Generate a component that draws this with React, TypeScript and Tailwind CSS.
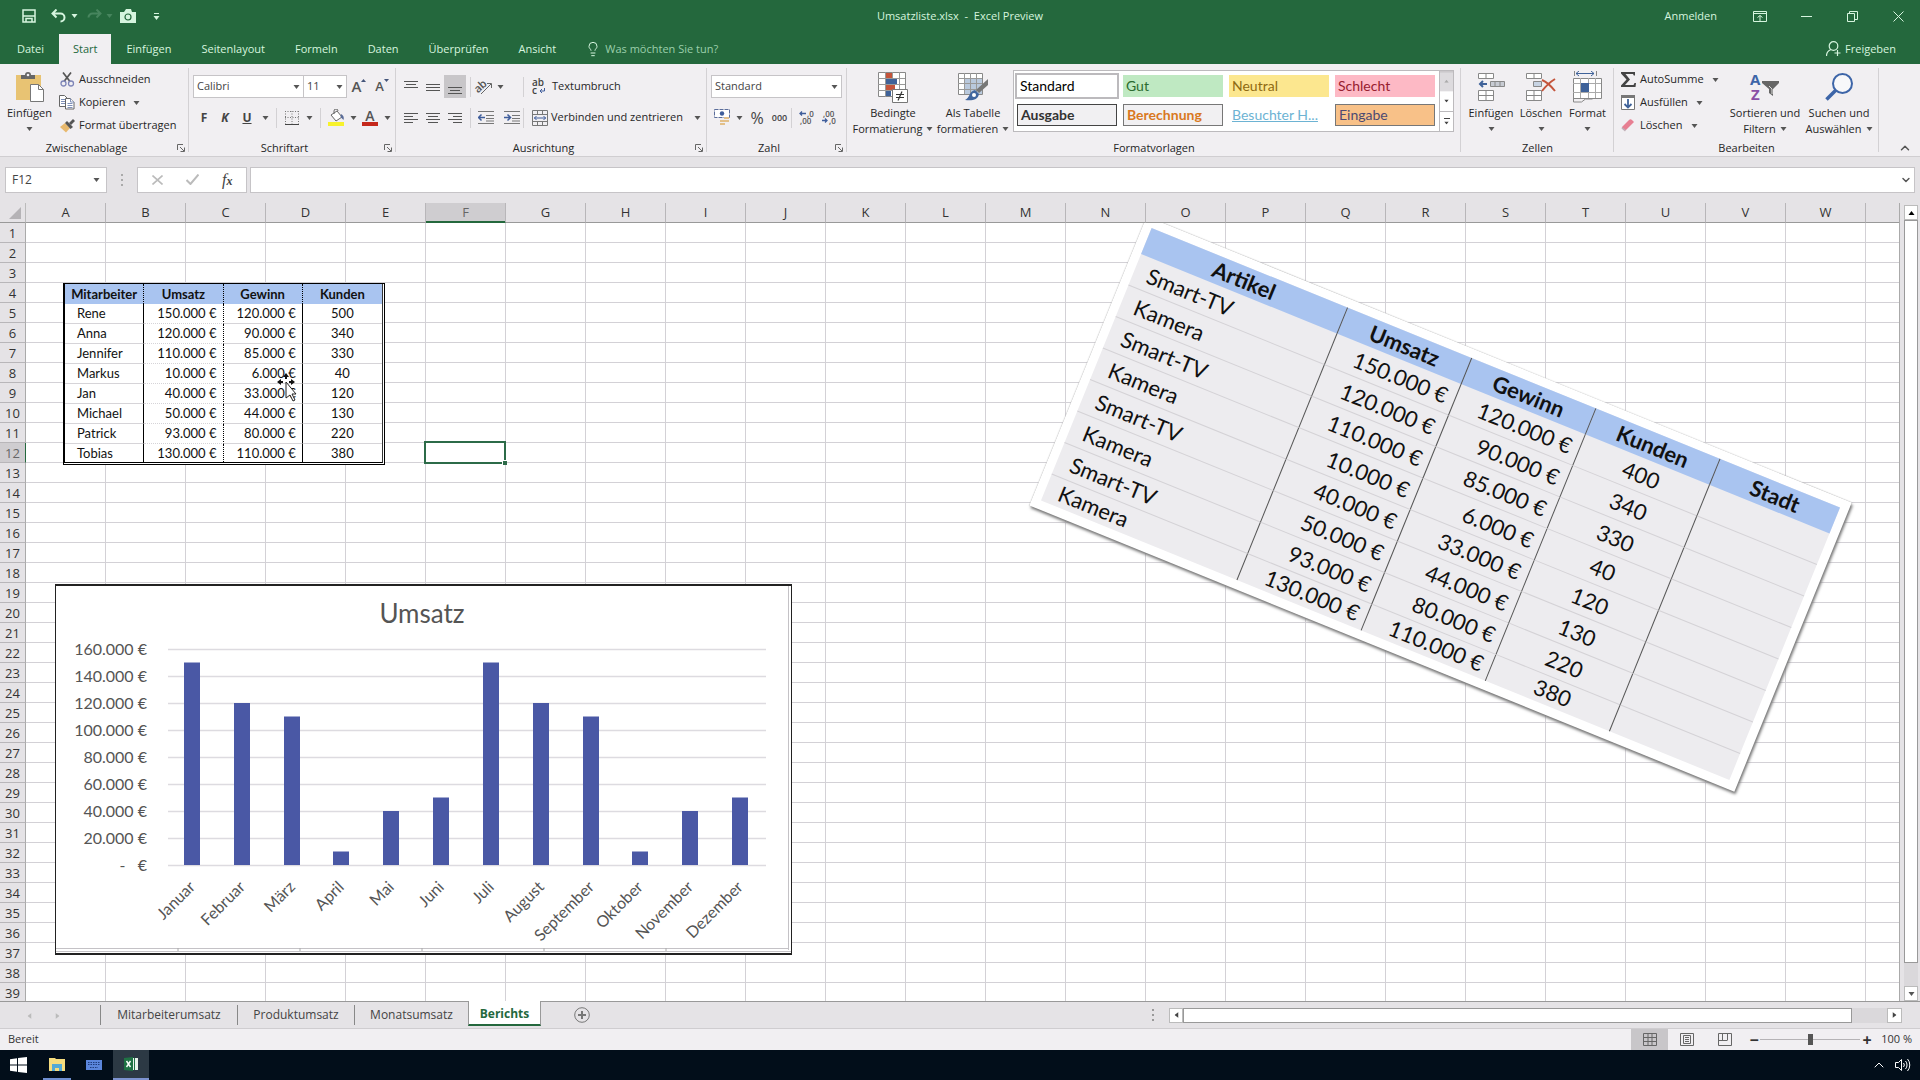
import React from "react";
import { ChevronDown, ChevronUp, Lightbulb } from "lucide-react";

const COLUMNS = "ABCDEFGHIJKLMNOPQRSTUVW".split("");
const ROWS = Array.from({ length: 39 }, (_, i) => i + 1);

const TABS = ["Datei", "Start", "Einfügen", "Seitenlayout", "Formeln", "Daten", "Überprüfen", "Ansicht"];

const EMPLOYEES = [
  ["Rene", "150.000 €", "120.000 €", "500"],
  ["Anna", "120.000 €", "90.000 €", "340"],
  ["Jennifer", "110.000 €", "85.000 €", "330"],
  ["Markus", "10.000 €", "6.000 €", "40"],
  ["Jan", "40.000 €", "33.000 €", "120"],
  ["Michael", "50.000 €", "44.000 €", "130"],
  ["Patrick", "93.000 €", "80.000 €", "220"],
  ["Tobias", "130.000 €", "110.000 €", "380"],
];

const PRODUCTS = [
  ["Smart-TV", "150.000 €", "120.000 €", "400"],
  ["Kamera", "120.000 €", "90.000 €", "340"],
  ["Smart-TV", "110.000 €", "85.000 €", "330"],
  ["Kamera", "10.000 €", "6.000 €", "40"],
  ["Smart-TV", "40.000 €", "33.000 €", "120"],
  ["Kamera", "50.000 €", "44.000 €", "130"],
  ["Smart-TV", "93.000 €", "80.000 €", "220"],
  ["Kamera", "130.000 €", "110.000 €", "380"],
];

const MONTHS = [
  { name: "Januar", value: 150 },
  { name: "Februar", value: 120 },
  { name: "März", value: 110 },
  { name: "April", value: 10 },
  { name: "Mai", value: 40 },
  { name: "Juni", value: 50 },
  { name: "Juli", value: 150 },
  { name: "August", value: 120 },
  { name: "September", value: 110 },
  { name: "Oktober", value: 10 },
  { name: "November", value: 40 },
  { name: "Dezember", value: 50 },
];

const Caret = ({ className = "text-[#555]" }: { className?: string }) => (
  <svg width="7" height="4" viewBox="0 0 7 4" className={`shrink-0 ${className}`}>
    <path d="M0.5 0h6L3.5 4z" fill="currentColor" />
  </svg>
);

const Divider = () => <span className="h-5 w-px bg-[#d3d1d4]" />;

interface GroupProps {
  label: string;
  className: string;
  launcher?: boolean;
  children: React.ReactNode;
}

const Group = ({ label, className, launcher, children }: GroupProps) => (
  <section className={`relative flex shrink-0 flex-col pt-1 after:absolute after:right-0 after:top-1 after:h-[84px] after:w-px after:bg-[#d3d1d4] ${className}`}>
    <div className="flex h-[72px]">{children}</div>
    <div className={`relative flex h-4 items-center justify-center ${launcher ? "pr-4" : ""}`}>
      <span>{label}</span>
      {launcher && (
        <button aria-label={`${label} Optionen`} className="absolute right-1 top-1">
          <svg width="8" height="8" viewBox="0 0 8 8" fill="none" stroke="#666">
            <path d="M0.5 6V0.5H6M3 3l4 4M7.5 3.5v4h-4" />
          </svg>
        </button>
      )}
    </div>
  </section>
);

interface BigButtonProps {
  icon: React.ReactNode;
  lines: string[];
  className: string;
}

const BigButton = ({ icon, lines, className }: BigButtonProps) => (
  <button className={`flex shrink-0 flex-col items-center pt-[3px] leading-4 ${className}`}>
    <span className="mb-[2px] flex h-8 items-center">{icon}</span>
    <span className="whitespace-nowrap">{lines[0]}</span>
    <span className="flex h-4 items-center gap-1 whitespace-nowrap">
      {lines[1]}
      <Caret />
    </span>
  </button>
);

const SmallButton = ({ icon, label, caret }: { icon: React.ReactNode; label: string; caret?: boolean }) => (
  <button className="flex h-[23px] items-center gap-1 whitespace-nowrap">
    <span className="flex w-4 justify-center">{icon}</span>
    {label}
    {caret && <span className="pl-1"><Caret /></span>}
  </button>
);

const Dropdown = ({ label, value, className }: { label: string; value: string; className: string }) => (
  <div className={`relative h-[23px] border border-[#c6c4c7] bg-white ${className}`}>
    <select aria-label={label} className="h-full w-full appearance-none bg-transparent pl-[3px] text-[#444] outline-none">
      <option>{value}</option>
    </select>
    <span className="pointer-events-none absolute right-[3px] top-[9px]"><Caret /></span>
  </div>
);

// three or four horizontal strokes given as [x, width]
const Lines = ({ rows, top = 1 }: { rows: number[][]; top?: number }) => (
  <svg width="14" height="14" viewBox="0 0 14 14">
    {rows.map(([x, w], i) => (
      <rect key={i} x={x} y={top + i * 3} width={w} height="1" fill="#555" />
    ))}
  </svg>
);

const IconButton = ({ label, className = "w-[22px]", children }: { label: string; className?: string; children: React.ReactNode }) => (
  <button aria-label={label} className={`flex h-[23px] shrink-0 items-center justify-center ${className}`}>
    {children}
  </button>
);

const PasteIcon = () => (
  <svg width="30" height="32" viewBox="0 0 30 32">
    <rect x="1" y="4" width="25" height="25" fill="#e8c373" />
    <path d="M6 8V4h4a3 3 0 0 1 6 0h4v4z" fill="#666" />
    <circle cx="13" cy="4" r="1.3" fill="#f1eff2" />
    <path d="M15.500 13.500h8l5 5v12h-13z" fill="#fff" stroke="#777" />
    <path d="M23.500 13.500v5h5" fill="none" stroke="#777" />
  </svg>
);

const CutIcon = () => (
  <svg width="15" height="15" viewBox="0 0 15 15" fill="none">
    <path d="M3 0.500l7 9M11 0.500l-7 9" stroke="#555" strokeWidth="1.700" />
    <circle cx="3.500" cy="11.500" r="2.500" stroke="#7f86b8" strokeWidth="1.300" />
    <circle cx="11" cy="11.500" r="2.500" stroke="#7f86b8" strokeWidth="1.300" />
  </svg>
);

const CopyIcon = () => (
  <svg width="16" height="15" viewBox="0 0 16 15" fill="#fff" stroke="#666">
    <path d="M0.500 0.500h5l3 3v8h-8z" />
    <path d="M2 4.500h4M2 6.500h4M2 8.500h4" stroke="#7f90b8" />
    <path d="M6.500 3.500h5l3.500 3.500v7h-8.500z" />
    <path d="M8.500 8.500h5M8.500 10.500h5M8.500 12.500h5M11.500 3.500v3.500h3.500" stroke="#7f90b8" />
  </svg>
);

const BrushIcon = () => (
  <svg width="15" height="14" viewBox="0 0 15 14">
    <path d="M0 8l5-4 5 5-4 4.500z" fill="#e8b96e" />
    <path d="M5 4l2-2 6 6-2.500 2z" fill="#555" />
    <path d="M9 4l4-4 2 2-4 4z" fill="#555" />
  </svg>
);

const OrientationIcon = () => (
  <svg width="18" height="16" viewBox="0 0 18 16" className="overflow-visible">
    <text x="0" y="11" fontSize="11" fontWeight="600" fill="#555" transform="rotate(-42 6 9)">ab</text>
    <path d="M6 15L16 5M16.500 9V4.500H12" stroke="#666" fill="none" />
  </svg>
);

const IndentIcon = ({ right }: { right?: boolean }) => (
  <svg width="16" height="14" viewBox="0 0 16 14">
    <path d="M0 0.500h16M8 4.500h8M8 7.500h8M0 12.500h16M8 10h8" stroke="#777" />
    <path d={right ? "M0 6.500h6M3.500 3.500l3 3-3 3" : "M1 6.500h6M3.500 3.500l-3 3 3 3"} stroke="#3f5d9b" strokeWidth="1.500" fill="none" />
  </svg>
);

const MergeIcon = () => (
  <svg width="16" height="16" viewBox="0 0 16 16" fill="none" stroke="#777">
    <path d="M0.500 0.500h15v15h-15zM0.500 4.500h15M0.500 11.500h15M5.500 0.500v4M10.500 0.500v4M5.500 11.500v4M10.500 11.500v4" />
    <path d="M2 8h12M4.500 6L2.500 8l2 2M11.500 6l2 2-2 2" stroke="#3f5d9b" />
  </svg>
);

const MoneyIcon = () => (
  <svg width="16" height="17" viewBox="0 0 16 17">
    <path d="M0.500 0.500h15v8h-15z" fill="#fff" stroke="#5b6d9b" strokeDasharray="4 1" />
    <circle cx="8" cy="4.500" r="2.200" fill="#3f5d9b" />
    <path d="M10 8h5v2h-5zM6 11h5v2H6zM10 11h5v2h-5zM6 14h5v2H6z" fill="#e3c08a" />
  </svg>
);

const DecimalIcon = ({ less }: { less?: boolean }) => (
  <svg width="16" height="15" viewBox="0 0 16 15" className="overflow-visible">
    <text x={less ? 1 : 8} y="7" fontSize="8" fontWeight="600" fill="#555">{less ? ",00" : ",0"}</text>
    <text x={less ? 7 : 1} y="14" fontSize="8" fontWeight="600" fill="#555">{less ? ",0" : ",00"}</text>
    <path d={less ? "M0 10.500h5M3 8.500l2 2-2 2" : "M1 3.500h6M3 1.500l-2 2 2 2"} stroke="#3f5d9b" strokeWidth="1.300" fill="none" />
  </svg>
);

const ConditionalIcon = () => (
  <svg width="30" height="31" viewBox="0 0 30 31">
    <path d="M0.500 0.500h27v24h-27z" fill="#fff" stroke="#888" />
    <path d="M7.500 0v25M14.500 0v25M21.500 0v25M0 6.500h27M0 12.500h27M0 18.500h27" stroke="#999" />
    <path d="M8 1h6v5H8zM8 13h9v5H8z" fill="#c4543b" />
    <path d="M8 7h11v5H8zM8 19h5v5H8z" fill="#3f6299" />
    <path d="M14.500 17.500h15v13h-15z" fill="#fff" stroke="#777" />
    <path d="M18 22.500h8M18 25.500h8M24 19.500l-4 9" stroke="#333" strokeWidth="1.200" />
  </svg>
);

const TableStyleIcon = () => (
  <svg width="30" height="30" viewBox="0 0 30 30">
    <path d="M0.500 1.500h24v21h-24z" fill="#fff" stroke="#888" />
    <path d="M6 7h18v15H6z" fill="#b9c9dd" />
    <path d="M6.500 1v21M12.500 1v21M18.500 1v21M0 6.500h24M0 11.500h24M0 17.500h24" stroke="#999" />
    <path d="M30 7v6L21 21l-3-3z" fill="#777" />
    <path d="M17 18l4 4c-1 6-7 7-14 6 5-2 4-9 10-10z" fill="#41669f" />
    <circle cx="16" cy="23" r="2" fill="#fff" />
  </svg>
);

const InsertCellsIcon = () => (
  <svg width="28" height="28" viewBox="0 0 28 28" fill="#fff" stroke="#888">
    <path d="M1.500 0.500h15v5h-15zM9 0.500v5M1.500 17.500h15v10h-15zM9 17.500v10M1.500 22.500h15" />
    <path d="M13.500 8.500h14v5h-14zM18 8.500v5M23 8.500v5" fill="#c7cbd3" />
    <path d="M3 11h7M6 8l-3 3 3 3" fill="none" stroke="#3f6299" strokeWidth="2" />
  </svg>
);

const DeleteCellsIcon = () => (
  <svg width="30" height="28" viewBox="0 0 30 28" fill="#fff" stroke="#888">
    <path d="M0.500 0.500h15v5h-15zM8 0.500v5M0.500 17.500h15v10h-15zM8 17.500v10M0.500 22.500h15" />
    <path d="M7.500 8.500h8v5h-8z" fill="#c7d3e3" />
    <path d="M16 7c5 2 9 6 13 11M29 6c-5 3-9 7-13 12" fill="none" stroke="#c4543b" strokeWidth="2" />
  </svg>
);

const FormatCellsIcon = () => (
  <svg width="29" height="32" viewBox="0 0 29 32" fill="none" stroke="#888">
    <path d="M0.500 7.500h28v20h-28z" fill="#fff" />
    <path d="M7.500 7v20M15.500 7v20M22.500 7v20M0 12.500h28M0 21.500h28" stroke="#aaa" />
    <path d="M8 12h8v9H8z" fill="#3f6299" stroke="none" />
    <path d="M0.500 27v4h8l4-3h7M1.500 0v5M23.500 0v5" />
    <path d="M3 2.500h18M6 0L3 2.500 6 5M18 0l3 2.500L18 5" stroke="#3f6299" />
  </svg>
);

const SortIcon = () => (
  <svg width="30" height="30" viewBox="0 0 30 30" className="overflow-visible">
    <text x="0" y="13" fontSize="15" fontWeight="700" fill="#3d65a8">A</text>
    <text x="1" y="28" fontSize="15" fontWeight="700" fill="#8a4fa5">Z</text>
    <path d="M12 9h17v2l-6 6v7l-4-3v-4l-7-6z" fill="#666" />
    <path d="M19 14l3 3v5" stroke="#ddd" fill="none" />
  </svg>
);

const FindIcon = () => (
  <svg width="28" height="28" viewBox="0 0 28 28">
    <circle cx="17.500" cy="10.500" r="9.500" fill="#f8f8fa" stroke="#3d65a8" strokeWidth="2" />
    <path d="M11 17L1.500 26.500" stroke="#3d65a8" strokeWidth="3.500" />
  </svg>
);

const TitleBar = () => (
  <header className="bg-[#24683d] text-[#d6f5df]">
    <div className="grid h-[34px] grid-cols-3 items-center pb-[2px]">
      <div className="flex items-center pl-[22px]">
        <button aria-label="Speichern" className="w-[29px]">
          <svg width="14" height="14" viewBox="0 0 14 14" fill="none" stroke="currentColor" strokeWidth="1.500">
            <path d="M1 1h12v12H1zM1 7h12M4 13V9.500h6V13" />
          </svg>
        </button>
        <button aria-label="Rückgängig" className="flex w-[35px] items-center gap-1">
          <svg width="16" height="14" viewBox="0 0 16 14" fill="none" stroke="currentColor" strokeWidth="2">
            <path d="M5.500 0.500L1.500 4.500l4 4M2 4.500h7.500a4 4 0 0 1 0 8" />
          </svg>
          <Caret className="text-[#d6f5df]" />
        </button>
        <button aria-label="Wiederholen" className="flex w-[34px] items-center gap-1 text-[#47855e]">
          <svg width="16" height="14" viewBox="0 0 16 14" fill="none" stroke="currentColor" strokeWidth="2">
            <path d="M10.500 0.500l4 4-4 4M14 4.500H6.500a4 4 0 0 0-4 4" />
          </svg>
          <Caret className="text-[#47855e]" />
        </button>
        <button aria-label="Kamera" className="w-[33px]">
          <svg width="16" height="14" viewBox="0 0 16 14">
            <path d="M0 3h4l2-3h5l1 3h4v11H0z" fill="currentColor" />
            <circle cx="8" cy="8" r="3" fill="none" stroke="#24683d" strokeWidth="1.200" />
          </svg>
        </button>
        <button aria-label="Symbolleiste anpassen" className="flex flex-col items-center gap-[2px]">
          <span className="h-px w-[5px] bg-[#d6f5df]" />
          <Caret className="text-[#d6f5df]" />
        </button>
      </div>
      <h1 className="whitespace-pre text-center">Umsatzliste.xlsx  -  Excel Preview</h1>
      <div className="flex items-center justify-end pr-4">
        <button className="mr-9">Anmelden</button>
        <button aria-label="Menüband-Anzeigeoptionen" className="w-12">
          <svg width="14" height="11" viewBox="0 0 14 11" fill="none" stroke="currentColor">
            <path d="M0.500 0.500h13v10h-13zM0.500 2.500h13M7 10V4.500M4.500 6.500L7 4.500l2.500 2" />
          </svg>
        </button>
        <button aria-label="Minimieren" className="w-[46px]">
          <svg width="11" height="11" viewBox="0 0 11 11" stroke="currentColor"><path d="M0 5.500h11" /></svg>
        </button>
        <button aria-label="Verkleinern" className="w-[46px]">
          <svg width="11" height="11" viewBox="0 0 11 11" fill="none" stroke="currentColor">
            <path d="M0.500 2.500h7v8h-7zM2.500 2V0.500h8v8H8" />
          </svg>
        </button>
        <button aria-label="Schließen">
          <svg width="11" height="11" viewBox="0 0 11 11" stroke="currentColor"><path d="M0.500 0.500l10 10M10.500 0.500l-10 10" /></svg>
        </button>
      </div>
    </div>
    <div className="flex h-[30px] items-stretch pl-[2px]">
      {TABS.map((tab) => (
        <button key={tab} className={tab === "Start" ? "bg-[#f1eff2] px-[14px] text-[#24683d]" : "px-[15px]"}>
          {tab}
        </button>
      ))}
      <label className="flex items-center gap-1 pl-[14px]">
        <Lightbulb size={16} strokeWidth={1.5} />
        <input aria-label="Was möchten Sie tun?" placeholder="Was möchten Sie tun?" className="w-40 bg-transparent outline-none placeholder:text-[#9bcfab]" />
      </label>
      <button className="ml-auto flex items-center gap-1 pr-6">
        <svg width="15" height="16" viewBox="0 0 15 16" fill="none" stroke="currentColor" strokeWidth="1.200">
          <circle cx="7.500" cy="5" r="4.300" />
          <path d="M0.500 15c0-4 2-5.500 4.500-6.500M11.500 9v6M8.500 12h6" />
        </svg>
        Freigeben
      </button>
    </div>
  </header>
);

const STYLES = [
  { name: "Standard", className: "bg-white outline-2 outline-[#bcbabd] text-black" },
  { name: "Gut", className: "bg-[#bfe9c2] text-[#2b6b2f]" },
  { name: "Neutral", className: "bg-[#fce78f] text-[#8f6a12]" },
  { name: "Schlecht", className: "bg-[#fdb9c5] text-[#97202f]" },
  { name: "Ausgabe", className: "border border-[#444] bg-[#f1f0f2] font-bold text-[#333]" },
  { name: "Berechnung", className: "border border-[#777] bg-[#f1f0f2] font-bold text-[#d9781e]" },
  { name: "Besuchter H...", className: "bg-white text-[#6db3d3] underline" },
  { name: "Eingabe", className: "border border-[#777] bg-[#f8c188] text-[#4d4a72]" },
];

const Ribbon = () => (
  <div className="flex h-[93px] border-b border-[#d0ced1] bg-[#f1eff2] text-[#262626]">
    <Group label="Zwischenablage" className="w-[189px]" launcher>
      <BigButton icon={<PasteIcon />} lines={["Einfügen", ""]} className="w-[59px]" />
      <div className="flex flex-col">
        <SmallButton icon={<CutIcon />} label="Ausschneiden" />
        <SmallButton icon={<CopyIcon />} label="Kopieren" caret />
        <SmallButton icon={<BrushIcon />} label="Format übertragen" />
      </div>
    </Group>

    <Group label="Schriftart" className="w-[207px]" launcher>
      <div className="flex flex-col gap-2 pl-1 pt-[7px]">
        <div className="flex items-center">
          <Dropdown label="Schriftart" value="Calibri" className="w-[111px]" />
          <Dropdown label="Schriftgrad" value="11" className="-ml-px w-[44px]" />
          <IconButton label="Schrift vergrößern" className="w-6">
            <span className="text-[15px] font-semibold text-[#555]">A</span>
            <span className="h-4"><svg width="5" height="3" viewBox="0 0 5 3"><path d="M0 3h5L2.500 0z" fill="#44557a" /></svg></span>
          </IconButton>
          <IconButton label="Schrift verkleinern">
            <span className="text-[13px] font-semibold text-[#555]">A</span>
            <span className="h-4"><svg width="5" height="3" viewBox="0 0 5 3"><path d="M0 0h5L2.500 3z" fill="#44557a" /></svg></span>
          </IconButton>
        </div>
        <div className="flex items-center text-xs text-[#444]">
          <IconButton label="Fett"><b>F</b></IconButton>
          <IconButton label="Kursiv" className="w-5"><b className="italic">K</b></IconButton>
          <IconButton label="Unterstrichen" className="w-6"><b className="underline">U</b></IconButton>
          <IconButton label="Unterstreichungsart" className="w-3"><Caret /></IconButton>
          <span className="w-[5px]" />
          <Divider />
          <IconButton label="Rahmen" className="w-[30px]">
            <svg width="14" height="14" viewBox="0 0 14 14" fill="none" stroke="#777">
              <path d="M0.500 0v13M7 0v13M13.500 0v13M0 0.500h14M0 6.500h14" strokeDasharray="1 1.500" />
              <path d="M0 13.500h14" stroke="#444" />
            </svg>
          </IconButton>
          <IconButton label="Rahmenart" className="w-1"><Caret /></IconButton>
          <span className="w-[9px]" />
          <Divider />
          <IconButton label="Füllfarbe" className="w-[30px]">
            <svg width="17" height="17" viewBox="0 0 17 17">
              <path d="M3 6l6-4 5 6-6 4z" fill="#fff" stroke="#666" />
              <path d="M6 5V2a2 2 0 0 1 4 0" fill="none" stroke="#666" />
              <path d="M13 5c2 1 3.500 3 2.500 6l-3-3z" fill="#5a6c99" />
              <path d="M0 13h16v4H0z" fill="#f7f22c" />
            </svg>
          </IconButton>
          <IconButton label="Füllfarbe wählen" className="w-1"><Caret /></IconButton>
          <IconButton label="Schriftfarbe" className="w-[30px]">
            <svg width="16" height="17" viewBox="0 0 16 17" className="overflow-visible">
              <text x="8" y="12" fontSize="14" fontWeight="600" textAnchor="middle" fill="#555">A</text>
              <path d="M0 13h16v4H0z" fill="#c5281c" />
            </svg>
          </IconButton>
          <IconButton label="Schriftfarbe wählen" className="w-1"><Caret /></IconButton>
        </div>
      </div>
    </Group>

    <Group label="Ausrichtung" className="w-[311px]" launcher>
      <div className="flex flex-col gap-2 pl-1 pt-[7px]">
        <div className="flex items-center">
          <IconButton label="Oben ausrichten"><Lines rows={[[0, 14], [2, 10], [0, 14]]} /></IconButton>
          <IconButton label="Zentriert ausrichten"><Lines rows={[[0, 14], [0, 14], [0, 14]]} top={4} /></IconButton>
          <IconButton label="Unten ausrichten" className="w-[22px] bg-[#c8c6c9]"><Lines rows={[[0, 14], [2, 10], [0, 14]]} top={7} /></IconButton>
          <span className="w-1" />
          <Divider />
          <IconButton label="Ausrichtung" className="w-[26px]"><OrientationIcon /></IconButton>
          <Caret />
          <span className="w-[19px]" />
          <Divider />
          <button className="flex items-center gap-[6px] pl-2">
            <svg width="14" height="16" viewBox="0 0 14 16" className="overflow-visible">
              <text x="0" y="7" fontSize="10" fontWeight="600" fill="#444">ab</text>
              <text x="0" y="15" fontSize="10" fontWeight="600" fill="#444">c</text>
              <path d="M12.500 9v3H8M10 10l-2 2 2 2" stroke="#3f5d9b" fill="none" />
            </svg>
            Textumbruch
          </button>
        </div>
        <div className="flex items-center">
          <IconButton label="Linksbündig"><Lines rows={[[0, 14], [0, 9], [0, 14], [0, 9]]} top={2} /></IconButton>
          <IconButton label="Zentriert"><Lines rows={[[0, 14], [2, 10], [0, 14], [2, 10]]} top={2} /></IconButton>
          <IconButton label="Rechtsbündig"><Lines rows={[[0, 14], [5, 9], [0, 14], [5, 9]]} top={2} /></IconButton>
          <span className="w-1" />
          <Divider />
          <IconButton label="Einzug verkleinern" className="w-[30px]"><IndentIcon /></IconButton>
          <IconButton label="Einzug vergrößern" className="w-[22px]"><IndentIcon right /></IconButton>
          <Divider />
          <button className="flex items-center gap-[3px] whitespace-nowrap pl-2">
            <MergeIcon />
            Verbinden und zentrieren
            <span className="pl-2"><Caret /></span>
          </button>
        </div>
      </div>
    </Group>

    <Group label="Zahl" className="w-[140px]" launcher>
      <div className="flex flex-col gap-2 pl-1 pt-[7px]">
        <Dropdown label="Zahlenformat" value="Standard" className="w-[131px]" />
        <div className="flex items-center text-[#444]">
          <IconButton label="Buchhaltungsformat"><MoneyIcon /></IconButton>
          <IconButton label="Währung wählen" className="w-[13px]"><Caret /></IconButton>
          <IconButton label="Prozent" className="w-[22px] text-base">%</IconButton>
          <IconButton label="Tausender" className="w-[23px] text-[9px] font-semibold">000</IconButton>
          <Divider />
          <IconButton label="Dezimalstelle hinzufügen" className="w-[30px]"><DecimalIcon /></IconButton>
          <IconButton label="Dezimalstelle löschen" className="w-4"><DecimalIcon less /></IconButton>
        </div>
      </div>
    </Group>

    <Group label="Formatvorlagen" className="w-[614px]">
      <BigButton icon={<ConditionalIcon />} lines={["Bedingte", "Formatierung"]} className="w-[92px]" />
      <BigButton icon={<TableStyleIcon />} lines={["Als Tabelle", "formatieren"]} className="w-[68px]" />
      <div className="ml-[6px] mt-[2px] flex h-[62px] border border-[#bcbabd] bg-white">
        <div className="grid grid-cols-4 gap-[6px] py-1 pl-[3px] pr-1 font-[Lato] text-[14px]">
          {STYLES.map((style) => (
            <button key={style.name} className={`h-[22px] w-[100px] px-[3px] text-left leading-5 ${style.className}`}>
              {style.name}
            </button>
          ))}
        </div>
        <div className="flex w-[14px] flex-col divide-y divide-[#bcbabd] border-l border-[#bcbabd]">
          <button aria-label="Nach oben" className="flex flex-1 rotate-180 items-center justify-center bg-[#dddbde]"><Caret className="scale-75 text-[#aaa]" /></button>
          <button aria-label="Nach unten" className="flex flex-1 items-center justify-center"><Caret className="scale-75 text-[#444]" /></button>
          <button aria-label="Mehr" className="flex flex-1 flex-col items-center justify-center gap-[2px]">
            <span className="h-px w-[6px] bg-[#444]" />
            <Caret className="scale-75 text-[#444]" />
          </button>
        </div>
      </div>
    </Group>

    <Group label="Zellen" className="w-[153px]">
      <BigButton icon={<InsertCellsIcon />} lines={["Einfügen", ""]} className="ml-1 w-[52px]" />
      <BigButton icon={<DeleteCellsIcon />} lines={["Löschen", ""]} className="w-[48px]" />
      <BigButton icon={<FormatCellsIcon />} lines={["Format", ""]} className="w-[45px]" />
    </Group>

    <Group label="Bearbeiten" className="w-[265px]">
      <div className="flex w-[109px] flex-col pl-[6px]">
        <SmallButton
          icon={<svg width="15" height="15" viewBox="0 0 15 15"><path d="M0 0h14v3.500h-1.200L12 2H4.500l4.500 5.500L4 13h8.500l1-2H15l-.5 4H0v-1.500L5.500 7.500 0 1.500z" fill="#444" /></svg>}
          label="AutoSumme"
          caret
        />
        <SmallButton
          icon={
            <svg width="14" height="15" viewBox="0 0 14 15" fill="#fff" stroke="#777">
              <path d="M0.500 0.500h13v14h-13z" />
              <path d="M0 1.500h14" strokeWidth="3" />
              <path d="M7 4v8M3.500 9L7 12.500 10.500 9" fill="none" stroke="#3f6299" strokeWidth="1.800" />
            </svg>
          }
          label="Ausfüllen"
          caret
        />
        <SmallButton
          icon={<svg width="14" height="13" viewBox="0 0 14 13"><path d="M1 8l7-7c1-1 2-1 3 0l2 2-8 8H3L1 9z" fill="#e77f92" /><path d="M1 8l4 3-1 1.500L0.500 9.500z" fill="#c0aeb6" /></svg>}
          label="Löschen"
          caret
        />
      </div>
      <BigButton icon={<SortIcon />} lines={["Sortieren und", "Filtern"]} className="w-[84px]" />
      <BigButton icon={<FindIcon />} lines={["Suchen und", "Auswählen"]} className="w-16" />
    </Group>

    <button aria-label="Menüband reduzieren" className="ml-auto self-end pb-[1px] pr-2">
      <ChevronUp size={14} strokeWidth={2.5} className="text-[#555]" />
    </button>
  </div>
);

const FormulaBar = () => (
  <div className="flex h-[46px] items-center bg-[#e5e3e6] pb-[1px] pl-[5px] pr-[5px]">
    <label className="flex h-[26px] w-[102px] items-center border border-[#c6c4c7] bg-white pr-[6px]">
      <input aria-label="Namenfeld" defaultValue="F12" className="w-full min-w-0 bg-transparent pl-[6px] text-xs text-[#444] outline-none" />
      <Caret />
    </label>
    <span className="flex w-[30px] flex-col items-center gap-[3px]">
      <i className="size-[2px] bg-[#aaa]" />
      <i className="size-[2px] bg-[#aaa]" />
      <i className="size-[2px] bg-[#aaa]" />
    </span>
    <div className="mr-[3px] flex h-[26px] w-[110px] items-center justify-around border border-[#c6c4c7] bg-white px-[2px]">
      <button aria-label="Abbrechen">
        <svg width="11" height="10" viewBox="0 0 11 10" stroke="#bbb" strokeWidth="1.600"><path d="M0.500 0.500l10 9M10.500 0.500l-10 9" /></svg>
      </button>
      <button aria-label="Eingeben">
        <svg width="13" height="11" viewBox="0 0 13 11" fill="none" stroke="#bbb" strokeWidth="2"><path d="M0.500 6l4 4L12.500 0.500" /></svg>
      </button>
      <button className="font-['Liberation_Serif',serif] text-base italic leading-5 text-[#444]">f<span className="text-xs font-bold">x</span></button>
    </div>
    <label className="flex h-[26px] flex-1 items-center border border-[#c6c4c7] bg-white pr-[2px]">
      <input aria-label="Bearbeitungsleiste" className="w-full bg-transparent px-1 outline-none" />
      <ChevronDown size={12} strokeWidth={3} className="text-[#555]" />
    </label>
  </div>
);

const EmployeeTable = () => (
  <div className="absolute left-[37px] top-[60px] w-[322px] border border-black bg-white pb-px pr-px">
    <table className="w-full table-fixed border-separate border-spacing-0 border-b border-l border-r border-black border-r-[#333] font-[Lato] text-[13px] leading-[19px] text-[#111]">
      <thead>
        <tr className="bg-[#a9c4f0]">
          {["Mitarbeiter", "Umsatz", "Gewinn", "Kunden"].map((head) => (
            <th key={head} className="h-5 border-r border-dotted border-black p-0 last:border-r-0">{head}</th>
          ))}
        </tr>
      </thead>
      <tbody>
        {EMPLOYEES.map(([name, sales, profit, customers]) => (
          <tr key={name} className="[&>td]:h-5 [&>td]:border-b [&>td]:border-b-[#d6d4d8] [&>td]:py-0 last:[&>td]:h-[18px] last:[&>td]:border-b-0 last:[&>td]:leading-[17px]">
            <td className="border-r border-r-black pl-3">{name}</td>
            <td className="border-r border-dotted border-r-black pr-[6px] text-right">{sales}</td>
            <td className="border-r border-r-black pr-[6px] text-right">{profit}</td>
            <td className="text-center">{customers}</td>
          </tr>
        ))}
      </tbody>
    </table>
  </div>
);

const ProductTable = () => (
  <div className="absolute left-[1034px] top-[125px] w-[761px] rotate-[22.1deg] bg-white p-[9px] shadow-[2px_2px_3px_#777,0_0_1px_#999]">
    <table className="w-full table-fixed border-separate border-spacing-0 bg-[#edecef] font-[Lato] text-[22px] leading-7 text-[#111]">
      <colgroup>
        <col className="w-[212px]" />
        <col className="w-[134px]" />
        <col className="w-[134px]" />
        <col className="w-[134px]" />
        <col />
      </colgroup>
      <thead>
        <tr className="bg-[#a9c4f0]">
          {["Artikel", "Umsatz", "Gewinn", "Kunden", "Stadt"].map((head) => (
            <th key={head} className="h-7 border-r border-[#555] p-0 last:border-r-0">{head}</th>
          ))}
        </tr>
      </thead>
      <tbody>
        {PRODUCTS.map(([name, sales, profit, customers], i) => (
          <tr key={i} className="[&>td]:h-[34px] [&>td]:border-b [&>td]:border-b-[#d4d2d6] [&>td]:border-r-[#555] [&>td]:py-0 last:[&>td]:h-7 last:[&>td]:border-b-0">
            <td className="border-r pl-[14px]">{name}</td>
            <td className="border-r pr-2 text-right">{sales}</td>
            <td className="border-r pr-2 text-right">{profit}</td>
            <td className="border-r text-center">{customers}</td>
            <td />
          </tr>
        ))}
      </tbody>
    </table>
  </div>
);

const SalesChart = () => (
  <div className="absolute left-[29px] top-[361px] border-2 border-l border-r border-[#222] bg-white">
    <svg width="735" height="367" viewBox="0 0 735 367" className="font-[Lato]" fill="#555">
      <path d="M732.500 0v364M0 362.500h732M0 365.500h735" stroke="#c4c2c6" fill="none" />
      {[1, 2, 3, 4, 5].map((i) => (
        <path key={i} d={`M${i * 122} 362v3`} stroke="#aaa" />
      ))}
      <text x="366" y="37" fontSize="26" textAnchor="middle">Umsatz</text>
      {[160, 140, 120, 100, 80, 60, 40, 20, 0].map((tick, i) => (
        <g key={tick}>
          <path d={`M112 ${63.5 + i * 27}h598`} stroke="#dddbe0" strokeWidth="1.500" />
          <text x="91" y={69 + i * 27} fontSize="16" textAnchor="end" className="whitespace-pre">
            {tick ? `${tick}.000 €` : "-   €"}
          </text>
        </g>
      ))}
      {MONTHS.map(({ name, value }, i) => {
        const x = 136 + i * 50 - Math.round(i / 6);
        const height = value * 1.35;
        return (
          <g key={name}>
            <rect x={x - 8} y={279 - height} width="16" height={height} fill="#4a58a5" />
            <text x={x + 4} y="302" fontSize="16" textAnchor="end" transform={`rotate(-45 ${x + 4} 302)`}>{name}</text>
          </g>
        );
      })}
    </svg>
  </div>
);

const MoveCursor = () => (
  <svg width="20" height="30" viewBox="0 0 20 30" className="absolute left-[251px] top-[150px]">
    <path d="M0 9l4-3v2h2v2H4v2zM18 9l-4-3v2h-2v2h2v2zM9 0l3 4H10v2H8V4H6z" fill="#111" />
    <path d="M9 9v16l4-3 3 6 2-1-3-6h4z" fill="#fff" stroke="#222" />
  </svg>
);

const Sheet = () => (
  <div className="flex min-h-0 flex-1 bg-[#e5e3e6]">
    <div className="relative min-w-0 flex-1 overflow-hidden border-r border-[#aaa]">
      <table className="w-full table-fixed border-separate border-spacing-0 text-[#333]">
        <colgroup>
          <col className="w-[26px]" />
          {COLUMNS.map((letter) => (
            <col key={letter} className="w-20" />
          ))}
          <col />
        </colgroup>
        <thead>
          <tr className="[&>th]:h-5 [&>th]:border-b [&>th]:p-0 [&>th]:text-[13px] [&>th]:font-normal [&>th]:leading-[19px]">
            <th className="border-r border-b-[#999] border-r-[#bbb]">
              <svg width="12" height="12" viewBox="0 0 12 12" className="ml-auto mr-1"><path d="M12 0v12H0z" fill="#b5b3b6" /></svg>
            </th>
            {COLUMNS.map((letter) => (
              <th
                key={letter}
                className={`border-r border-r-[#b8b6b9] ${letter === "F" ? "border-b-[#24683d] bg-[#cfcdd0] text-[#666] shadow-[inset_0_-1px_#24683d]" : "border-b-[#999]"}`}
              >
                {letter}
              </th>
            ))}
            <th className="border-b-[#999]" />
          </tr>
        </thead>
        <tbody>
          {ROWS.map((row) => (
            <tr key={row}>
              <th
                className={`h-5 border-b border-r border-b-[#b8b6b9] p-0 pt-px text-[13px] font-normal leading-[18px] ${row === 12 ? "border-r-[#24683d] bg-[#cfcdd0] text-[#666]" : "border-r-[#aaa] bg-[#e5e3e6]"}`}
              >
                {row}
              </th>
              {COLUMNS.map((letter) => (
                <td key={letter} className="border-b border-r border-[#d3d1d6] bg-white p-0" />
              ))}
              <td className="border-b border-[#d3d1d6] bg-white p-0" />
            </tr>
          ))}
        </tbody>
      </table>
      <div className="absolute bottom-0 left-[26px] right-0 top-5 overflow-hidden">
        <div className="absolute left-[398px] top-[218px] h-[23px] w-[82px] border-2 border-[#2c6b48]">
          <i className="absolute -bottom-[3px] -right-[3px] size-[5px] border-l border-t border-white bg-[#2c6b48]" />
        </div>
        <EmployeeTable />
        <SalesChart />
        <ProductTable />
        <MoveCursor />
      </div>
    </div>
    <div className="flex w-5 flex-col pl-1 pr-[2px] pt-[2px]">
      <button aria-label="Hochscrollen" className="flex h-[15px] items-center justify-center border border-[#bbb] bg-white"><Caret className="rotate-180" /></button>
      <div className="flex-1 bg-[#dad8db]">
        <div className="h-[97%] border border-[#999] bg-white" />
      </div>
      <button aria-label="Runterscrollen" className="flex h-[15px] items-center justify-center border border-[#bbb] bg-white"><Caret /></button>
    </div>
  </div>
);

const SheetTabs = () => (
  <div className="flex h-7 items-start border-b border-t border-b-[#cfcdd0] border-t-[#999] bg-[#e5e3e6] text-xs text-[#444]">
    <div className="flex h-[27px] w-[100px] items-center gap-[21px] pl-[26px]">
      <button aria-label="Vorheriges Blatt"><Caret className="rotate-90 text-[#bbb]" /></button>
      <button aria-label="Nächstes Blatt"><Caret className="-rotate-90 text-[#bbb]" /></button>
    </div>
    {[
      { name: "Mitarbeiterumsatz", className: "w-[137px] border-l border-[#888]" },
      { name: "Produktumsatz", className: "w-[117px] border-l border-[#888]" },
      { name: "Monatsumsatz", className: "w-[114px] border-l border-[#888]" },
    ].map((tab) => (
      <button key={tab.name} className={`mt-[3px] h-5 whitespace-nowrap ${tab.className}`}>{tab.name}</button>
    ))}
    <button className="-mt-px h-[25px] w-[73px] border-x border-b-2 border-x-[#999] border-b-[#24683d] bg-white pt-[3px] font-bold text-[#24683d]">Berichts</button>
    <button aria-label="Neues Blatt" className="ml-[33px] mt-[5px]">
      <svg width="16" height="16" viewBox="0 0 16 16" fill="none" stroke="#777">
        <circle cx="8" cy="8" r="7.300" />
        <path d="M8 4v8M4 8h8" strokeWidth="2" />
      </svg>
    </button>
    <div className="ml-auto flex h-[26px] w-[768px] items-center pr-[2px]">
      <span className="flex w-[17px] flex-col items-start gap-[3px]">
        <i className="size-[2px] bg-[#999]" />
        <i className="size-[2px] bg-[#999]" />
        <i className="size-[2px] bg-[#999]" />
      </span>
      <button aria-label="Nach links scrollen" className="flex h-[15px] w-[14px] items-center justify-center border border-[#bbb] bg-white"><Caret className="rotate-90" /></button>
      <div className="flex h-[15px] flex-1 bg-[#dad8db]">
        <div className="w-[95%] border border-[#999] bg-white" />
      </div>
      <button aria-label="Nach rechts scrollen" className="mr-[16px] flex h-[15px] w-[15px] items-center justify-center border border-[#bbb] bg-white"><Caret className="-rotate-90" /></button>
    </div>
  </div>
);

const StatusBar = () => (
  <div className="flex h-[21px] items-center bg-[#f1eff2] pl-2 pr-2 text-[#333]">
    <span>Bereit</span>
    <div className="ml-auto flex h-full items-center">
      <button aria-label="Normal" className="flex h-full w-[37px] items-center justify-center bg-[#c8c6c9]">
        <svg width="14" height="13" viewBox="0 0 14 13" fill="none" stroke="#666"><path d="M0.500 0.500h13v12h-13zM5 0v13M9 0v13M0 4.500h14M0 8.500h14" /></svg>
      </button>
      <button aria-label="Seitenlayout" className="flex w-[38px] justify-center">
        <svg width="14" height="13" viewBox="0 0 14 13" fill="none" stroke="#666"><path d="M0.500 0.500h13v12h-13zM3.500 2.500h7v8h-7zM5 4.500h4M5 6.500h4M5 8.500h4" /></svg>
      </button>
      <button aria-label="Umbruchvorschau" className="flex w-[38px] justify-center">
        <svg width="14" height="13" viewBox="0 0 14 13" fill="none" stroke="#666"><path d="M0.500 0.500h13v12h-13zM4.500 0v7M9.500 0v7M0 7.500h9.500" /></svg>
      </button>
      <button aria-label="Verkleinern" className="ml-1 w-3 text-base font-bold leading-4">−</button>
      <input
        type="range"
        aria-label="Zoom"
        defaultValue={50}
        className="h-4 w-[100px] appearance-none bg-[linear-gradient(#b5b3b6,#b5b3b6)] bg-[length:100%_1px] bg-center bg-no-repeat [&::-webkit-slider-thumb]:h-[11px] [&::-webkit-slider-thumb]:w-[5px] [&::-webkit-slider-thumb]:appearance-none [&::-webkit-slider-thumb]:bg-[#555]"
      />
      <button aria-label="Vergrößern" className="w-[14px] text-base font-bold leading-4">+</button>
      <span className="w-[38px] whitespace-nowrap text-right">100 %</span>
    </div>
  </div>
);

const Taskbar = () => (
  <footer className="flex h-[30px] items-stretch bg-[#020e1a] text-white">
    <button aria-label="Start" className="flex w-9 items-center justify-center">
      <svg width="17" height="16" viewBox="0 0 17 16" fill="#fff">
        <path d="M0 2.200l7-1v6.300H0zM8 1l9-1v7.500H8zM0 8.500h7v6.300l-7-1zM8 8.500h9V16l-9-1z" />
      </svg>
    </button>
    <button aria-label="Explorer" className="ml-[7px] flex w-7 items-center justify-center border-b-2 border-[#6f8fd0]">
      <svg width="16" height="14" viewBox="0 0 16 14">
        <path d="M0 1h6l1 1h9v12H0z" fill="#f5dc7e" />
        <path d="M3 14V7h10v7h-3v-3H6v3z" fill="#53a9d6" />
      </svg>
    </button>
    <button aria-label="Bildschirmtastatur" className="ml-[9px] flex w-7 items-center justify-center">
      <svg width="16" height="10" viewBox="0 0 16 10">
        <path d="M0 0h16v10H0z" fill="#5b86dc" />
        <path d="M2 2.500h12M2 4.500h12M4 7.500h8" stroke="#1f3c7c" strokeDasharray="1.500 1" />
      </svg>
    </button>
    <button aria-label="Excel" className="ml-[5px] flex w-9 items-center justify-center border-b-2 border-[#7d93cf] bg-[#2c3944]">
      <svg width="14" height="14" viewBox="0 0 14 14">
        <path d="M7 1h7v12H7z" fill="#e9f2ec" />
        <path d="M10.500 1v12" stroke="#1f7244" />
        <path d="M0 1l9-1v14l-9-1z" fill="#1f7244" />
        <path d="M2.500 4l4 6M6.500 4l-4 6" stroke="#fff" strokeWidth="1.400" />
      </svg>
    </button>
    <div className="ml-auto flex items-center gap-2 pr-2">
      <ChevronUp size={16} strokeWidth={1.5} />
      <svg width="17" height="14" viewBox="0 0 17 14" fill="none" stroke="#fff">
        <path d="M0.500 4.500h3l3-3v11l-3-3h-3zM8.500 5a3 3 0 0 1 0 4M10.500 3a6 6 0 0 1 0 8M12.500 1a9 9 0 0 1 0 12" />
      </svg>
    </div>
  </footer>
);

export default function App() {
  return (
    <div className="flex h-screen w-full flex-col overflow-hidden font-['Open_Sans',sans-serif] text-[11px]">
      <TitleBar />
      <Ribbon />
      <FormulaBar />
      <Sheet />
      <SheetTabs />
      <StatusBar />
      <Taskbar />
    </div>
  );
}
